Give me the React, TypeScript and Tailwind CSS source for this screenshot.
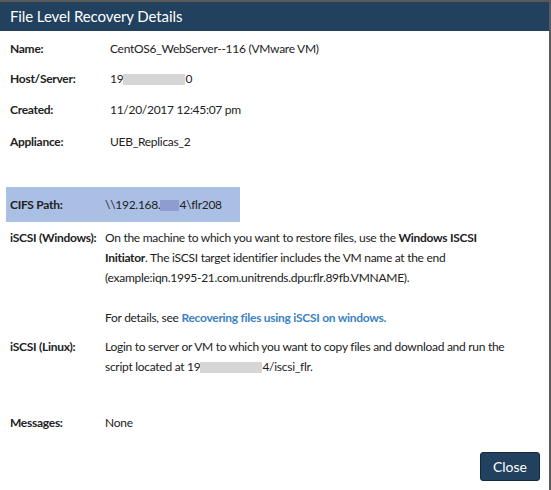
export default function App() {
  const font = { fontFamily: 'Lato, "Open Sans", sans-serif' }

  return (
    <div
      className="w-[551px] h-[490px] bg-white border-t-2 border-r-2 border-[#5a5a5a] flex flex-col text-[12px] tracking-[-0.28px] text-[#222]"
      style={font}
    >
      <div className="h-[29px] shrink-0 bg-[#22415f] flex items-center px-[10px]">
        <h1 className="text-[15px] tracking-[-0.1px] text-white">File Level Recovery Details</h1>
      </div>

      <div className="flex flex-col px-[10px] pt-[3px]">
        <Row label="Name:" h="h-[30px]">CentOS6_WebServer--116 (VMware VM)</Row>
        <Row label="Host/Server:" h="h-[30px]">
          19<Blur w="w-[62px]" />0
        </Row>
        <Row label="Created:" h="h-[32px]">11/20/2017 12:45:07 pm</Row>
        <Row label="Appliance:" h="h-[32px]">UEB_Replicas_2</Row>
      </div>

      <div className="mt-[29px] ml-[6px] w-[234px] h-[35px] shrink-0 bg-[#a9bfe4] flex items-center px-[4px] whitespace-nowrap">
        <span className="w-[95px] font-bold">CIFS Path:</span>
        <span>
          \\192.168.<span className="inline-block w-[19px] h-[11px] bg-[#8f9cd0] align-middle" />4\flr208
        </span>
      </div>

      <div className="flex flex-col px-[10px] pt-[6px]">
        <div className="flex">
          <span className="w-[95px] shrink-0 font-bold leading-[20px]">iSCSI (Windows):</span>
          <div className="w-[410px] leading-[20px]">
            <p>
              On the machine to which you want to restore files, use the <b>Windows ISCSI Initiator</b>. The iSCSI target
              identifier includes the VM name at the end (example:iqn.1995-21.com.unitrends.dpu:flr.89fb.VMNAME).
            </p>
            <p className="mt-[20px]">
              For details, see <span className="text-[#3b82c4] font-bold">Recovering files using iSCSI on windows.</span>
            </p>
          </div>
        </div>

        <div className="flex mt-[9px]">
          <span className="w-[95px] shrink-0 font-bold leading-[20px]">iSCSI (Linux):</span>
          <p className="w-[410px] leading-[20px]">
            Login to server or VM to which you want to copy files and download and run the script located at 19
            <Blur w="w-[62px]" />4/iscsi_flr.
          </p>
        </div>

        <div className="flex mt-[36px] h-[20px] items-center">
          <span className="w-[95px] shrink-0 font-bold">Messages:</span>
          <span>None</span>
        </div>
      </div>

      <div className="flex-1" />

      <div className="flex justify-end pr-[9px] pb-[9px]">
        <button className="w-[60px] h-[29px] bg-[#22415f] border border-[#15293d] rounded-[3px] text-white text-[14px] tracking-normal">
          Close
        </button>
      </div>
    </div>
  )
}

function Row({ label, h, children }: { label: string; h: string; children: React.ReactNode }) {
  return (
    <div className={`flex items-center ${h}`}>
      <span className="w-[100px] shrink-0 font-bold">{label}</span>
      <span className="whitespace-nowrap">{children}</span>
    </div>
  )
}

function Blur({ w }: { w: string }) {
  return <span className={`inline-block ${w} h-[11px] bg-[#d6d6d6] align-middle`} />
}
